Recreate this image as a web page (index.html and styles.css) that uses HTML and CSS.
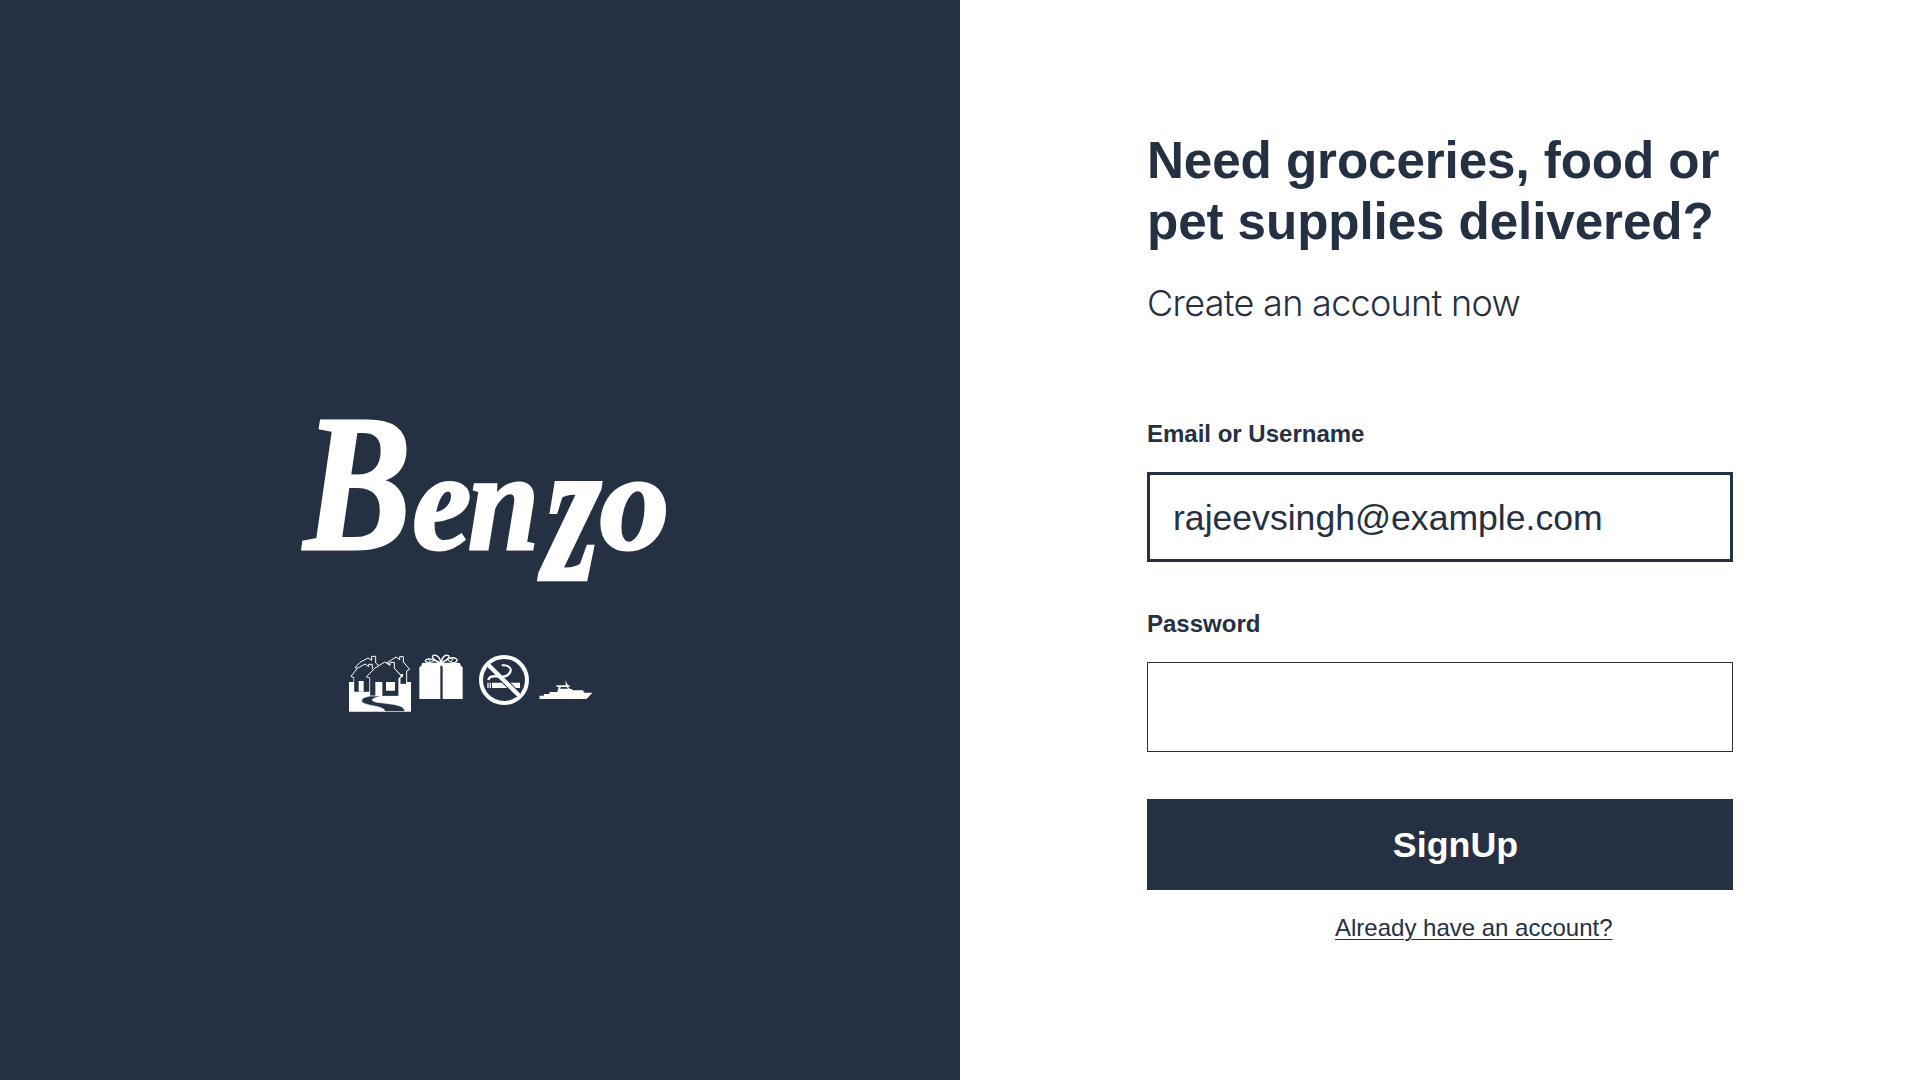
FILE: index.html
```html
<!DOCTYPE html>
<html lang="en">
<head>
<meta charset="utf-8">
<title>Benzo - Sign up</title>
<link rel="stylesheet" href="styles.css">
</head>
<body>
<main class="page">
  <section class="brand">
    <div class="wordmark" aria-label="Benzo"><span class="cap">B</span><span class="le">e</span><span class="ln">n</span><span class="lz">z</span><span class="lo">o</span></div>
    <div class="icons">
      <svg class="houses" viewBox="27 30 186 171">
        <path fill="#fff" d="M27 111H46V96H184V111H213V200H27z"/>
        <g fill="#253043" stroke="#fff" stroke-width="3">
          <path d="M140 54L168 36L179 44V35H190V51L209 73L200 78V118H180V88L150 58z"/>
          <path d="M45 68L60 52L84 39L95 46V34H107V54L118 63L100 74L84 78z"/>
          <path d="M33 94L52 70L75 57L86 65V58H97V71L112 82L94 96L84 97V140H42V98z"/>
          <path d="M79 96L104 70L134 51L150 61V52H163V70L186 95L176 100V153H90V99z"/>
        </g>
        <path fill="#253043" d="M43 98H88V140H43zM91 98H175V152H91z"/>
        <path fill="#fff" d="M56 108H71V140H56zM106 111H127V153H106zM138 111H165V137H138zM182 87H189V96H182z"/>
        <path fill="#253043" stroke="#fff" stroke-width="2" d="M90 153H126C96 160 88 165 107 171C148 178 193 176 195 200H135C136 180 64 184 65 167C66 157 80 156 90 153z"/>
      </svg>
      <svg class="gift" viewBox="237 27 132 135">
        <path fill="#fff" d="M238 67L246 61H301V162H238zM305 61H361L368 67V162H308V66zM246 54L290 52L302 57L316 52L360 54L362 62H244z"/>
        <g fill="#253043" stroke="#fff" stroke-width="4">
          <path d="M302 54C277 58 256 54 256 46C263 37 277 42 302 54z"/>
          <path d="M304 54C329 36 345 36 351 44C354 54 329 58 304 54z"/>
          <path d="M302 54C280 46 273 36 280 31C292 28 301 40 303 54z"/>
          <path d="M304 54C306 34 317 28 326 32C331 38 316 48 304 54z"/>
        </g>
        <path fill="none" stroke="#fff" stroke-width="3" d="M284 46L265 55M323 46L342 55M266 43L271 52M339 40L334 50"/>
      </svg>
      <svg class="smoke" viewBox="42 31 150 150">
        <circle cx="117" cy="106" r="69" fill="none" stroke="#fff" stroke-width="12"/>
        <path fill="#fff" d="M67 114H71V130H67zM74 114H78V130H74zM81 114H165V130H81z"/>
        <path fill="none" stroke="#fff" stroke-width="6" d="M110 62C130 60 141 70 136 82C130 96 111 99 92 95C79 94 72 98 70 106"/>
        <path stroke="#253043" stroke-width="18" d="M71 62L162 152"/>
        <path stroke="#fff" stroke-width="13" d="M68 59L166 156"/>
        <path fill="none" stroke="#fff" stroke-width="6" d="M137 79C130 96 111 99 92 95C79 94 72 98 70 106"/>
      </svg>
      <svg class="boat" viewBox="222 105 161 57">
        <path fill="#fff" d="M223 162V152H236V147H253V141H276L281 126H274V121H302L301 106L308 121H313V126H308L315 132H321V136H353L358 143H382L364 162z"/>
        <path fill="#253043" d="M287 126H304L310 131H285z"/>
      </svg>
    </div>
  </section>
  <section class="signup">
    <form class="form">
      <h1 class="title">Need groceries, food or<br>pet supplies delivered?</h1>
      <p class="subtitle">Create an account now</p>
      <label class="label" for="user">Email or Username</label>
      <input class="field active" id="user" type="text" value="rajeevsingh@example.com">
      <label class="label second" for="pass">Password</label>
      <input class="field" id="pass" type="password">
      <button class="submit" type="button">SignUp</button>
      <a class="login" href="#">Already have an account?</a>
    </form>
  </section>
</main>
</body>
</html>
```
FILE: styles.css
```css
* { box-sizing: border-box; }
body { margin: 0; background: #fff; color: #253043; font-family: "Liberation Sans", Arial, sans-serif; }
.page { display: grid; grid-template-columns: 960px 960px; height: 1080px; overflow: hidden; }

.brand { background: #253043; color: #fff; padding: 378px 0 0 301px; }
.wordmark { display: flex; align-items: baseline; width: 380px; height: 276px; padding-left: 3px; font-family: "Liberation Serif", serif; font-style: italic; font-weight: 700; font-size: 139px; line-height: 210px; -webkit-text-stroke: 3px #fff; }
.cap { font-size: 196px; transform: scaleX(.82); transform-origin: 0 50%; }
.le { margin-left: -24px; transform: scaleX(.95); }
.ln { margin-left: -4px; transform: scaleX(.92); transform-origin: 0 50%; }
.lz { margin-left: 1px; transform: scale(1, 1.5) skewX(-4deg); transform-origin: 50% 92px; }
.lo { margin-left: -1px; }
.icons { display: flex; align-items: flex-start; padding-left: 48px; }
.icons svg { display: block; flex: none; }
.houses { width: 62px; height: 57px; margin-top: 1px; }
.gift { width: 44px; height: 45px; margin-left: 8px; }
.smoke { width: 50px; height: 50px; margin: 1px 0 0 16px; }
.boat { width: 54px; height: 19px; margin: 26px 0 0 10px; }

.signup { padding: 130px 0 0 187px; }
.form { display: flex; flex-direction: column; width: 586px; }
.title { margin: 0; font-size: 51.2px; line-height: 61px; font-weight: 700; white-space: nowrap; letter-spacing: -.1px; }
.subtitle { margin: 29px 0 0; font-family: Inter, "Liberation Sans", sans-serif; font-weight: 300; font-size: 36px; line-height: 44px; letter-spacing: -.7px; }
.label { margin-top: 95px; font-size: 24px; line-height: 28px; font-weight: 700; }
.label.second { margin-top: 48px; }
.field { width: 586px; height: 90px; margin: 24px 0 0; padding: 2px 25px 0; border: 1px solid #253043; border-radius: 0; outline: 0; background: #fff; color: #253043; font: 35.6px "Liberation Sans", Arial, sans-serif; }
.field.active { border-width: 3px; padding: 2px 23px 0; }
.submit { height: 91px; margin-top: 47px; padding: 2px 0 0 31px; border: 0; background: #253043; color: #fff; font: 700 35.8px "Liberation Sans", Arial, sans-serif; }
.login { align-self: flex-start; margin: 24px 0 0 188px; color: #253043; font-size: 24px; line-height: 28px; text-decoration-thickness: 1px; text-underline-offset: 3px; }
```
